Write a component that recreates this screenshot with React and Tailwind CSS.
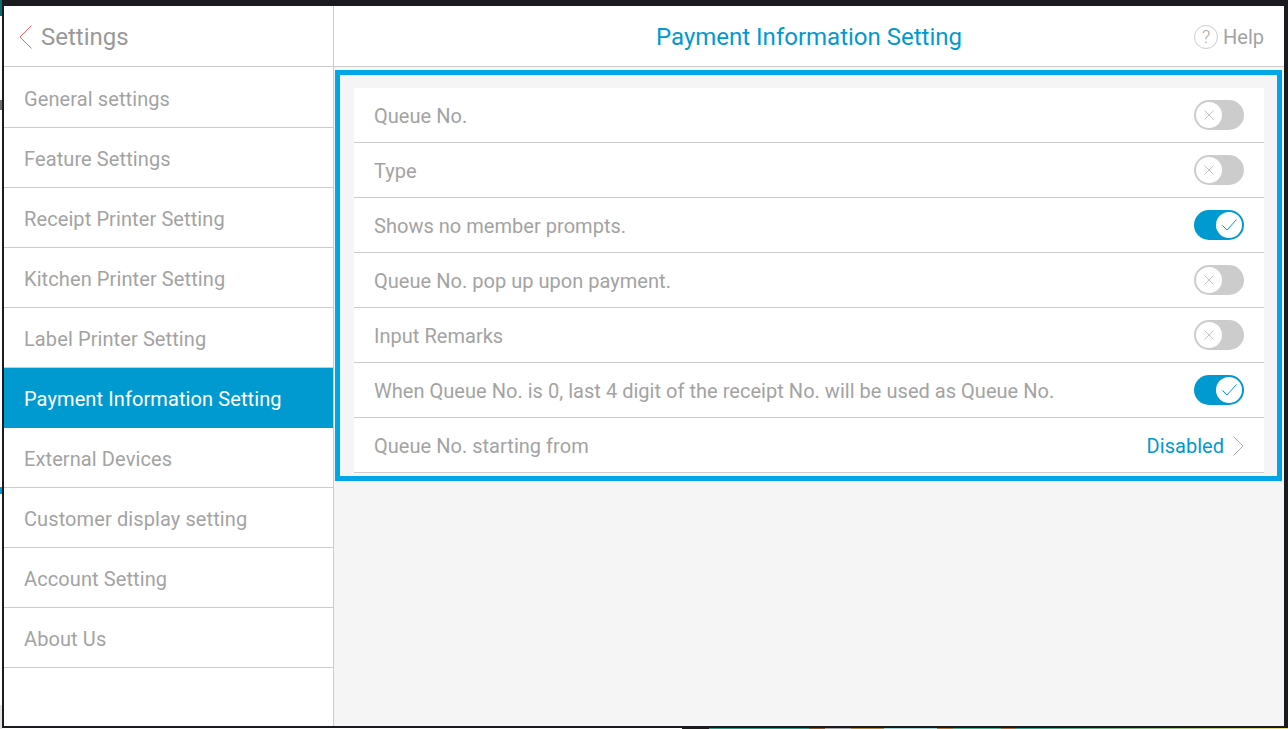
import React from "react";

const menu = [
  "General settings",
  "Feature Settings",
  "Receipt Printer Setting",
  "Kitchen Printer Setting",
  "Label Printer Setting",
  "Payment Information Setting",
  "External Devices",
  "Customer display setting",
  "Account Setting",
  "About Us",
];

const rows = [
  { label: "Queue No.", on: false },
  { label: "Type", on: false },
  { label: "Shows no member prompts.", on: true },
  { label: "Queue No. pop up upon payment.", on: false },
  { label: "Input Remarks", on: false },
  { label: "When Queue No. is 0, last 4 digit of the receipt No. will be used as Queue No.", on: true },
];

function Toggle({ on }) {
  return (
    <div className={on ? "flex h-[30px] w-[50px] items-center justify-end rounded-full bg-[#009ad0] p-[2px]" : "flex h-[30px] w-[50px] items-center justify-start rounded-full bg-[#cccccc] p-[2px]"}>
      <div className="flex h-[26px] w-[26px] items-center justify-center rounded-full bg-white">
        {on ? (
          <svg className="h-[12px] w-[15px]" viewBox="0 0 15 12" fill="none" stroke="#009ad0" strokeWidth="1">
            <path d="M0.5 6.5 L5 11 L14.5 0.5" />
          </svg>
        ) : (
          <svg className="h-[10px] w-[10px]" viewBox="0 0 10 10" fill="none" stroke="#c4c4c4" strokeWidth="1">
            <path d="M0.5 0.5 L9.5 9.5 M9.5 0.5 L0.5 9.5" />
          </svg>
        )}
      </div>
    </div>
  );
}

export default function App() {
  return (
    <div className="flex h-[729px] w-[1288px] overflow-hidden bg-white font-['Roboto',sans-serif]">
      {/* sliver of the desktop behind the window */}
      <div className="flex w-[2px] shrink-0 flex-col">
        <div className="h-[16px] bg-[#0f6b6b]" />
        <div className="h-[84px]" />
        <div className="h-[10px] bg-[#77706a]" />
        <div className="h-[377px]" />
        <div className="h-[7px] bg-[#009ad0]" />
        <div className="h-[211px]" />
        <div className="flex-1 bg-[#e4e4e4]" />
      </div>
      <div className="flex w-[1286px] flex-col">
        <div className="h-[6px] shrink-0 bg-[#1a1a1f]" />
        <div className="flex h-[722px] shrink-0 border-b-[2px] border-l-[2px] border-r-[4px] border-[#1a1a1f]">
          {/* left menu */}
          <aside className="flex w-[330px] shrink-0 flex-col border-r border-[#cccccc] bg-white">
            <div className="mb-px flex h-[61px] shrink-0 items-center border-b border-[#cccccc] pl-[15px] pt-[2px]">
              <svg className="h-[24px] w-[13px]" viewBox="0 0 13 24" fill="none" stroke="#f06060" strokeWidth="1">
                <path d="M12.5 0.5 L1 12 L12.5 23.5" />
              </svg>
              <span className="ml-[9px] text-[24px] leading-none text-[#999999]">Settings</span>
            </div>
            {menu.map((item) => (
              <div
                key={item}
                className={
                  item === "Payment Information Setting"
                    ? "flex h-[60px] shrink-0 items-center bg-[#009ad0] pl-[20px] pt-[2px] text-[20px] tracking-[0.1px] text-white"
                    : "flex h-[60px] shrink-0 items-center border-b border-[#cccccc] pl-[20px] pt-[2px] text-[20px] tracking-[0.1px] text-[#a3a3a3]"
                }
              >
                {item}
              </div>
            ))}
          </aside>
          {/* right side */}
          <main className="flex flex-1 flex-col bg-[#f5f5f5]">
            <div className="flex h-[61px] shrink-0 items-center border-b border-[#cccccc] bg-white pt-[2px]">
              <div className="w-[80px]" />
              <div className="flex-1 text-center text-[24px] leading-none text-[#009ad0]">Payment Information Setting</div>
              <div className="flex w-[80px] items-center justify-end gap-[5px] pr-[20px] text-[20px] leading-none text-[#a3a3a3]">
                <span className="flex h-[24px] w-[24px] shrink-0 items-center justify-center rounded-full border border-[#cccccc] text-[18px] font-light">?</span>
                Help
              </div>
            </div>
            <div className="ml-[1px] mr-[2px] mt-[3px] h-[411px] border-[5px] border-[#00a6e6] pl-[14px] pr-[13px] pt-[13px]">
              <div className="bg-white">
                {rows.map((row) => (
                  <div key={row.label} className="flex h-[55px] items-center justify-between border-b border-[#cccccc] px-[20px] text-[20px] tracking-[0.03px] text-[#a3a3a3]">
                    <span className="pt-[2px]">{row.label}</span>
                    <Toggle on={row.on} />
                  </div>
                ))}
                <div className="flex h-[55px] items-center justify-between border-b border-[#cccccc] px-[20px] text-[20px] tracking-[0.03px] text-[#a3a3a3]">
                  <span className="pt-[2px]">Queue No. starting from</span>
                  <div className="flex items-center gap-[9px] pt-[2px] text-[#009ad0]">
                    Disabled
                    <svg className="h-[20px] w-[11px]" viewBox="0 0 11 20" fill="none" stroke="#aaaaaa" strokeWidth="1">
                      <path d="M0.5 0.5 L10 10 L0.5 19.5" />
                    </svg>
                  </div>
                </div>
              </div>
            </div>
          </main>
        </div>
        {/* wallpaper sliver under the window */}
        <div className="flex h-[1px] shrink-0 pl-[680px]">
          <div className="w-[27px] bg-[#1c1c1c]" />
          <div className="w-[100px] bg-[#2f9f88]" />
          <div className="w-[16px] bg-[#8a5a2a]" />
          <div className="w-[26px] bg-[#a8a8a8]" />
          <div className="w-[33px] bg-[#b08a3a]" />
          <div className="w-[53px] bg-[#9fd8d8]" />
          <div className="w-[16px] bg-[#b07a3a]" />
          <div className="w-[48px] bg-[#45b890]" />
          <div className="w-[15px] bg-[#a87038]" />
          <div className="flex-1 bg-[linear-gradient(to_right,#2fa890,#f0e070)]" />
        </div>
      </div>
    </div>
  );
}
